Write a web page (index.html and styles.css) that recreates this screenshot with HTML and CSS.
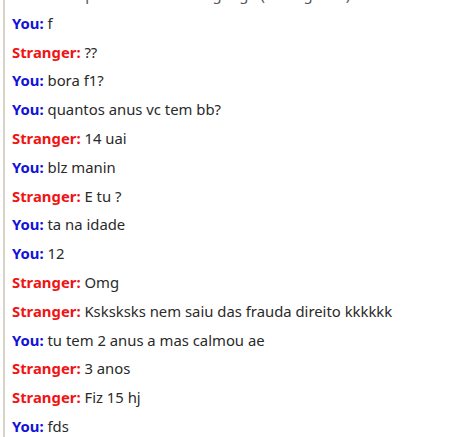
FILE: index.html
```html
<!DOCTYPE html>
<html>
<head>
<meta charset="utf-8">
<link rel="stylesheet" href="styles.css">
</head>
<body>
<div class="log">
  <p class="status">You both speak the same language (Portuguese). You both like omegle brasil</p>
  <p class="msg"><b class="you">You:</b> f</p>
  <p class="msg"><b class="stranger">Stranger:</b> ??</p>
  <p class="msg"><b class="you">You:</b> bora f1?</p>
  <p class="msg"><b class="you">You:</b> quantos anus vc tem bb?</p>
  <p class="msg"><b class="stranger">Stranger:</b> 14 uai</p>
  <p class="msg"><b class="you">You:</b> blz manin</p>
  <p class="msg"><b class="stranger">Stranger:</b> E tu ?</p>
  <p class="msg"><b class="you">You:</b> ta na idade</p>
  <p class="msg"><b class="you">You:</b> 12</p>
  <p class="msg"><b class="stranger">Stranger:</b> Omg</p>
  <p class="msg"><b class="stranger">Stranger:</b> Ksksksks nem saiu das frauda direito kkkkkk</p>
  <p class="msg"><b class="you">You:</b> tu tem 2 anus a mas calmou ae</p>
  <p class="msg"><b class="stranger">Stranger:</b> 3 anos</p>
  <p class="msg"><b class="stranger">Stranger:</b> Fiz 15 hj</p>
  <p class="msg"><b class="you">You:</b> fds</p>
</div>
</body>
</html>
```
FILE: styles.css
```css
html, body {
  margin: 0;
  padding: 0;
  background: #fff;
  overflow: hidden;
  height: 437px;
}
.log {
  margin-left: 3px;
  margin-top: -20px;
  border-left: 2px solid #d9d3c7;
  padding-left: 7px;
  height: 457px;
  overflow: hidden;
  font-family: "Noto Sans", "Open Sans", sans-serif;
  font-size: 14.85px;
  color: #2a2a2a;
}
.log p {
  margin: 0;
  line-height: 28.8px;
  white-space: nowrap;
}
.status {
  color: #555;
}
.you {
  color: #1212d8;
}
.stranger {
  color: #f01414;
}
```
